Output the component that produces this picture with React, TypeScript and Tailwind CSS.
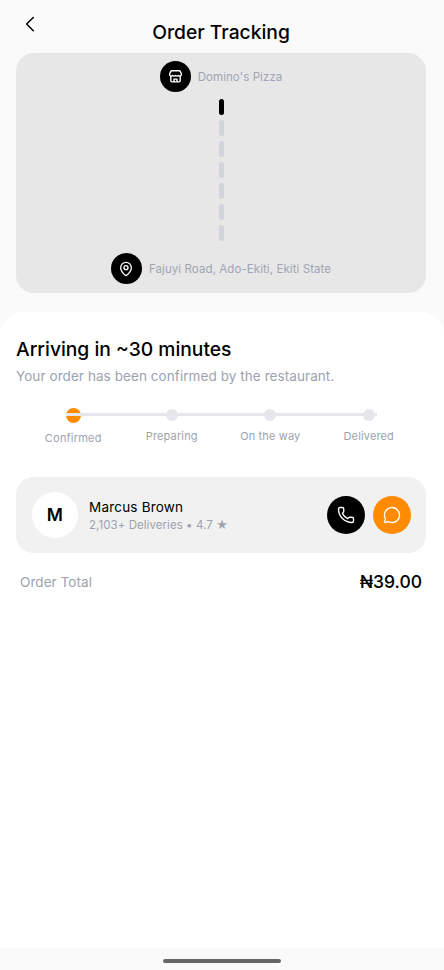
import type { ReactNode } from "react";
import { MapPin, MessageCircle, Phone } from "lucide-react";

const segments = [true, false, false, false, false, false, false];

function StoreIcon() {
  return (
    <svg width="15" height="15" viewBox="0 0 16 16" fill="none" stroke="white" strokeWidth="1.5" strokeLinecap="round" strokeLinejoin="round">
      <path d="M4 1.800h8c.4 0 .7.200.9.500L14.200 5v1.200c0 .8-.7 1.400-1.600 1.400-.7 0-1.250-.3-1.500-.8-.3.5-.85.8-1.550.8S8.300 7.300 8 6.800c-.3.5-.85.8-1.550.8s-1.250-.3-1.550-.8c-.25.5-.8.8-1.500.8-.9 0-1.600-.6-1.600-1.400V5l1.300-2.700c.2-.3.5-.5.9-.5z" />
      <path d="M3 8v4.200c0 .9.6 1.500 1.500 1.500h7c.9 0 1.500-.6 1.500-1.500V8M6.400 13.500v-2.700h3.200v2.700" />
    </svg>
  );
}

function Stop({ icon, label }: { icon: ReactNode; label: string }) {
  return (
    <div className="flex h-[31px] items-center gap-[7px]">
      <div className="flex size-[31px] shrink-0 items-center justify-center rounded-full bg-black">{icon}</div>
      <span className="pt-px text-[11.5px] leading-4 tracking-[0.08px] text-[#a0a5b3]">{label}</span>
    </div>
  );
}

function Step({ label, active = false }: { label: string; active?: boolean }) {
  return (
    <div className="flex w-[98.5px] flex-col items-center">
      {active ? (
        <>
          <div className="mt-[0.5px] size-[15.5px] rounded-full bg-[#ff8c00]" />
          <span className="mt-[7px] text-[11px] leading-4 tracking-[0.2px] text-[#9ca3af]">{label}</span>
        </>
      ) : (
        <>
          <div className="mt-[2px] size-[12px] rounded-full bg-[#e5e7eb]" />
          <span className="mt-[7px] text-[11px] leading-4 tracking-[0.14px] text-[#9ca3af]">{label}</span>
        </>
      )}
    </div>
  );
}

export default function App() {
  return (
    <div className="flex h-[970px] w-[444px] flex-col overflow-hidden bg-[#fafafa] font-['Inter',sans-serif] text-black">
      <header className="grid h-[53px] shrink-0 grid-cols-[80px_1fr_82px]">
        <button aria-label="Back" className="ml-[24px] mt-[16px] flex h-4 w-3">
          <svg width="12" height="16" viewBox="0 0 12 16" fill="none" stroke="black" strokeWidth="1.500" strokeLinecap="round" strokeLinejoin="round">
            <path d="M9.300 1.500 2.600 8l6.700 6.700" />
          </svg>
        </button>
        <h1 className="mt-[18px] text-center text-[19.25px] font-medium leading-7">Order Tracking</h1>
      </header>

      <section className="ml-4 flex h-[240px] w-[410px] shrink-0 flex-col items-center rounded-[18px] bg-[#e7e7e7] pt-[8px]">
        <Stop icon={<StoreIcon />} label="Domino's Pizza" />
        <div className="mt-[7px] flex flex-col gap-[6px]">
          {segments.map((active, i) => (
            <div key={i} className={active ? "h-[15.5px] -mb-[0.5px] w-[5px] rounded-full bg-black" : "h-[15.5px] -mb-[0.5px] w-[5px] rounded-full bg-[#d1d3dd]"} />
          ))}
        </div>
        <div className="mt-[13px]">
          <Stop icon={<MapPin size={16} strokeWidth={2} color="white" />} label="Fajuyi Road, Ado-Ekiti, Ekiti State" />
        </div>
      </section>

      <main className="mt-[19px] flex h-[636px] shrink-0 flex-col rounded-t-[24px] bg-white pl-4 pr-[18px] pt-[23px]">
        <h2 className="pt-px text-[19.25px] font-medium leading-[27px]">Arriving in ~30 minutes</h2>
        <p className="mt-[3px] text-[13.5px] leading-5 tracking-[0.075px] text-[#9ca3af]">Your order has been confirmed by the restaurant.</p>

        <div className="relative mt-[21px] flex h-10 justify-center">
          <Step label="Confirmed" active />
          <Step label="Preparing" />
          <Step label="On the way" />
          <Step label="Delivered" />
          <div className="absolute left-[50px] top-[5.500px] h-[3px] w-[311px] bg-[#e5e7eb]" />
        </div>

        <div className="mt-[30px] flex h-[76px] items-center rounded-[18px] bg-[#f1f1f1] pl-4 pr-[15px]">
          <div className="flex size-[45.5px] items-center justify-center rounded-full bg-white text-[17.5px] font-semibold">M</div>
          <div className="ml-[11.5px] flex flex-1 flex-col pt-[2px]">
            <span className="text-[13.500px] leading-[18px] tracking-[0.2px]">Marcus Brown</span>
            <span className="text-[11.5px] leading-[18px] tracking-[0.06px] text-[#9ca3af]">2,103+ Deliveries • 4.7 ★</span>
          </div>
          <button aria-label="Call" className="flex size-[38px] items-center justify-center rounded-full bg-black">
            <Phone size={18} strokeWidth={1.8} color="white" />
          </button>
          <button aria-label="Message" className="ml-2 flex size-[38px] items-center justify-center rounded-full bg-[#ff8c00]">
            <MessageCircle size={18} strokeWidth={1.8} color="white" />
          </button>
        </div>

        <div className="mt-[17px] flex h-6 items-center justify-between px-1">
          <span className="text-[13.5px] leading-5 tracking-[0.07px] text-[#9ca3af]">Order Total</span>
          <span className="text-[17.500px] font-medium leading-6">₦39.00</span>
        </div>
      </main>

      <footer className="flex h-[22px] shrink-0 justify-center pr-px pt-[11px]">
        <div className="h-[4px] w-[118px] rounded-full bg-[#666666]" />
      </footer>
    </div>
  );
}
